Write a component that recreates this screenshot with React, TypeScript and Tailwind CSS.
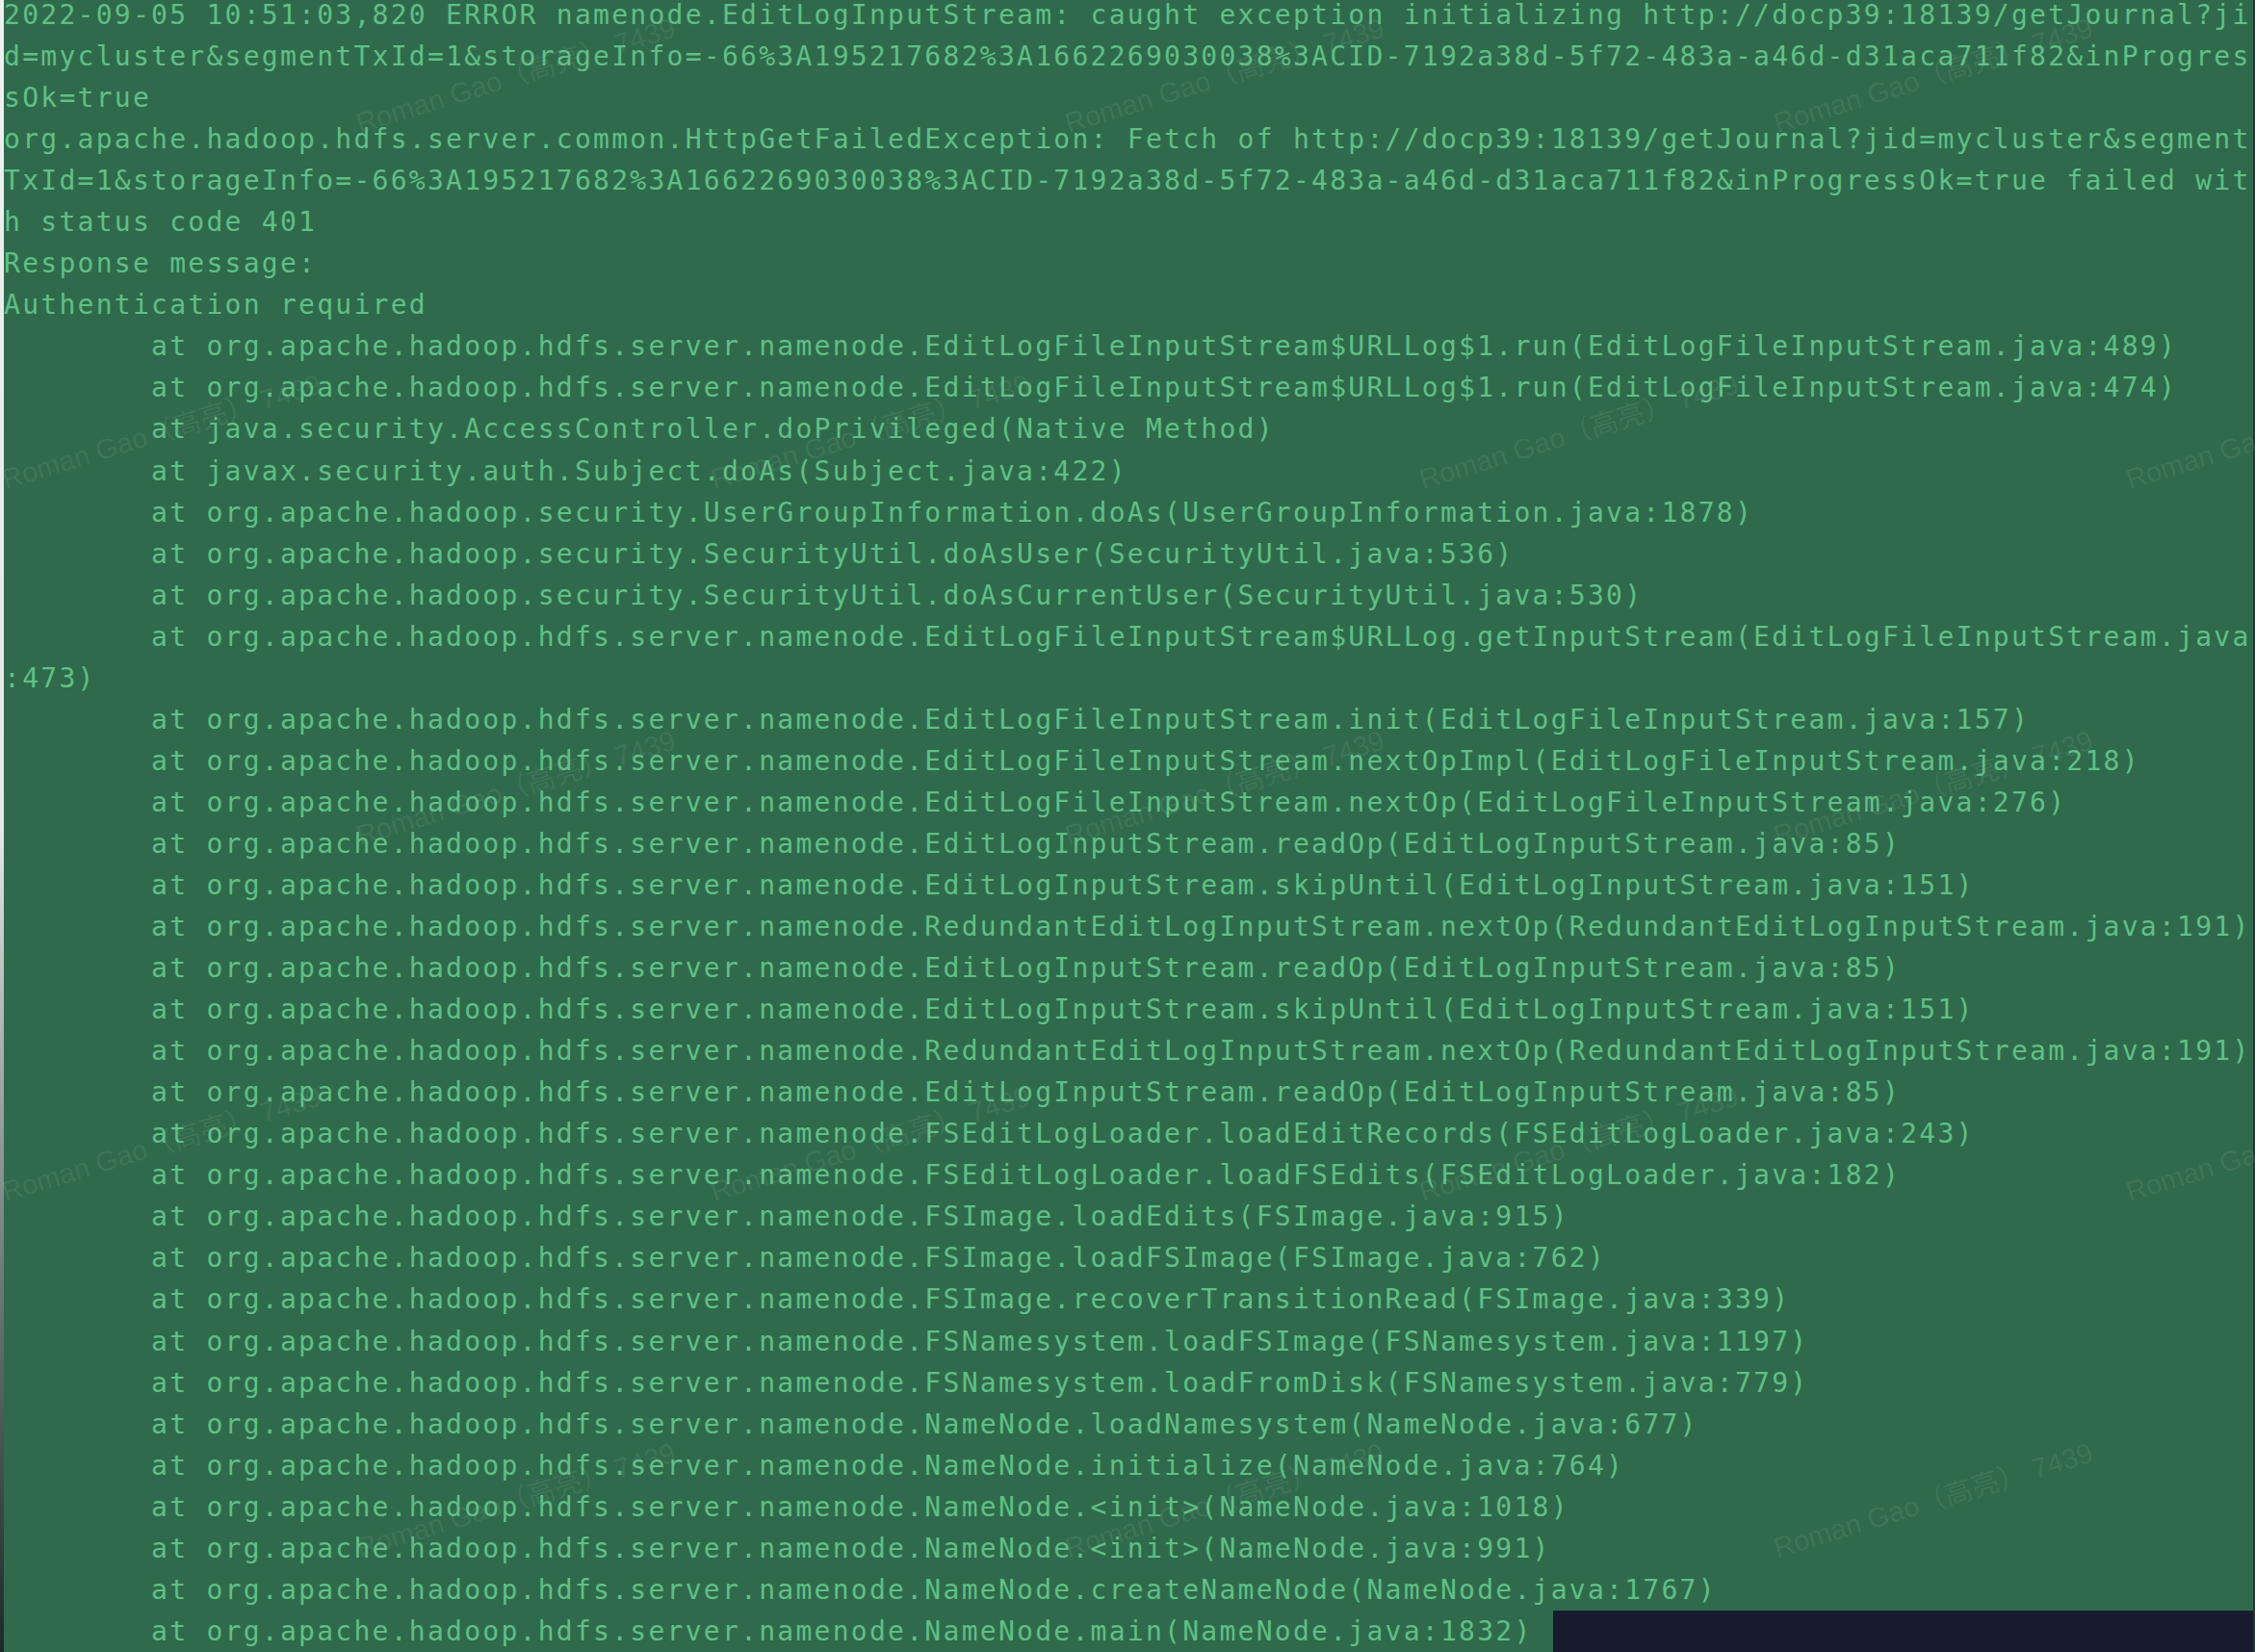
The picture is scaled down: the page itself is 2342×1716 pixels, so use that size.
const lines = [
  '2022-09-05 10:51:03,820 ERROR namenode.EditLogInputStream: caught exception initializing http://docp39:18139/getJournal?ji',
  'd=mycluster&segmentTxId=1&storageInfo=-66%3A195217682%3A1662269030038%3ACID-7192a38d-5f72-483a-a46d-d31aca711f82&inProgres',
  'sOk=true',
  'org.apache.hadoop.hdfs.server.common.HttpGetFailedException: Fetch of http://docp39:18139/getJournal?jid=mycluster&segment',
  'TxId=1&storageInfo=-66%3A195217682%3A1662269030038%3ACID-7192a38d-5f72-483a-a46d-d31aca711f82&inProgressOk=true failed wit',
  'h status code 401',
  'Response message:',
  'Authentication required',
  '        at org.apache.hadoop.hdfs.server.namenode.EditLogFileInputStream$URLLog$1.run(EditLogFileInputStream.java:489)',
  '        at org.apache.hadoop.hdfs.server.namenode.EditLogFileInputStream$URLLog$1.run(EditLogFileInputStream.java:474)',
  '        at java.security.AccessController.doPrivileged(Native Method)',
  '        at javax.security.auth.Subject.doAs(Subject.java:422)',
  '        at org.apache.hadoop.security.UserGroupInformation.doAs(UserGroupInformation.java:1878)',
  '        at org.apache.hadoop.security.SecurityUtil.doAsUser(SecurityUtil.java:536)',
  '        at org.apache.hadoop.security.SecurityUtil.doAsCurrentUser(SecurityUtil.java:530)',
  '        at org.apache.hadoop.hdfs.server.namenode.EditLogFileInputStream$URLLog.getInputStream(EditLogFileInputStream.java',
  ':473)',
  '        at org.apache.hadoop.hdfs.server.namenode.EditLogFileInputStream.init(EditLogFileInputStream.java:157)',
  '        at org.apache.hadoop.hdfs.server.namenode.EditLogFileInputStream.nextOpImpl(EditLogFileInputStream.java:218)',
  '        at org.apache.hadoop.hdfs.server.namenode.EditLogFileInputStream.nextOp(EditLogFileInputStream.java:276)',
  '        at org.apache.hadoop.hdfs.server.namenode.EditLogInputStream.readOp(EditLogInputStream.java:85)',
  '        at org.apache.hadoop.hdfs.server.namenode.EditLogInputStream.skipUntil(EditLogInputStream.java:151)',
  '        at org.apache.hadoop.hdfs.server.namenode.RedundantEditLogInputStream.nextOp(RedundantEditLogInputStream.java:191)',
  '        at org.apache.hadoop.hdfs.server.namenode.EditLogInputStream.readOp(EditLogInputStream.java:85)',
  '        at org.apache.hadoop.hdfs.server.namenode.EditLogInputStream.skipUntil(EditLogInputStream.java:151)',
  '        at org.apache.hadoop.hdfs.server.namenode.RedundantEditLogInputStream.nextOp(RedundantEditLogInputStream.java:191)',
  '        at org.apache.hadoop.hdfs.server.namenode.EditLogInputStream.readOp(EditLogInputStream.java:85)',
  '        at org.apache.hadoop.hdfs.server.namenode.FSEditLogLoader.loadEditRecords(FSEditLogLoader.java:243)',
  '        at org.apache.hadoop.hdfs.server.namenode.FSEditLogLoader.loadFSEdits(FSEditLogLoader.java:182)',
  '        at org.apache.hadoop.hdfs.server.namenode.FSImage.loadEdits(FSImage.java:915)',
  '        at org.apache.hadoop.hdfs.server.namenode.FSImage.loadFSImage(FSImage.java:762)',
  '        at org.apache.hadoop.hdfs.server.namenode.FSImage.recoverTransitionRead(FSImage.java:339)',
  '        at org.apache.hadoop.hdfs.server.namenode.FSNamesystem.loadFSImage(FSNamesystem.java:1197)',
  '        at org.apache.hadoop.hdfs.server.namenode.FSNamesystem.loadFromDisk(FSNamesystem.java:779)',
  '        at org.apache.hadoop.hdfs.server.namenode.NameNode.loadNamesystem(NameNode.java:677)',
  '        at org.apache.hadoop.hdfs.server.namenode.NameNode.initialize(NameNode.java:764)',
  '        at org.apache.hadoop.hdfs.server.namenode.NameNode.<init>(NameNode.java:1018)',
  '        at org.apache.hadoop.hdfs.server.namenode.NameNode.<init>(NameNode.java:991)',
  '        at org.apache.hadoop.hdfs.server.namenode.NameNode.createNameNode(NameNode.java:1767)',
]

const lastLine = '        at org.apache.hadoop.hdfs.server.namenode.NameNode.main(NameNode.java:1832)'

// watermark tiles: staggered rows
const marks: { x: number; y: number }[] = []
;[110, 480, 850, 1220, 1590].forEach((y, row) => {
  const xs = row % 2 === 0 ? [-360, 376, 1112, 1848] : [8, 744, 1480, 2214]
  xs.forEach((x) => marks.push({ x, y }))
})

export default function App() {
  return (
    <div className="relative flex h-[1716px] w-[2342px] overflow-hidden bg-[#306a4c]">
      <div className="w-[4px] shrink-0 bg-gradient-to-b from-[#eef1ef] via-[#e4e8e6] to-[#1c2a26]" />
      <div className="min-w-0 flex-1 overflow-hidden">
        <div className="-mt-[6px] font-['DejaVu_Sans_Mono','Liberation_Mono',monospace] text-[28px] leading-[43.05px] tracking-[2.27px] text-[#5fc085]">
          {lines.map((line, i) => (
            <div key={i} className="h-[43.05px] whitespace-pre">
              {line}
            </div>
          ))}
          <div className="flex h-[43.05px]">
            <div className="w-[1609px] shrink-0 whitespace-pre">{lastLine}</div>
            <div className="flex-1 bg-[#181b2e]" />
          </div>
        </div>
      </div>
      <div className="w-[2px] shrink-0 bg-[#1f3a32]" />

      <div className="pointer-events-none absolute inset-0">
        {marks.map((m, i) => (
          <div
            key={i}
            className="absolute origin-[0_100%] -rotate-[17deg] whitespace-pre font-['Liberation_Sans','Noto_Sans_CJK_SC',sans-serif] text-[29px] leading-[36px] text-[rgba(215,225,220,0.09)]"
            style={{ left: m.x, top: m.y }}
          >
            Roman Gao（高亮） 7439
          </div>
        ))}
      </div>
    </div>
  )
}
